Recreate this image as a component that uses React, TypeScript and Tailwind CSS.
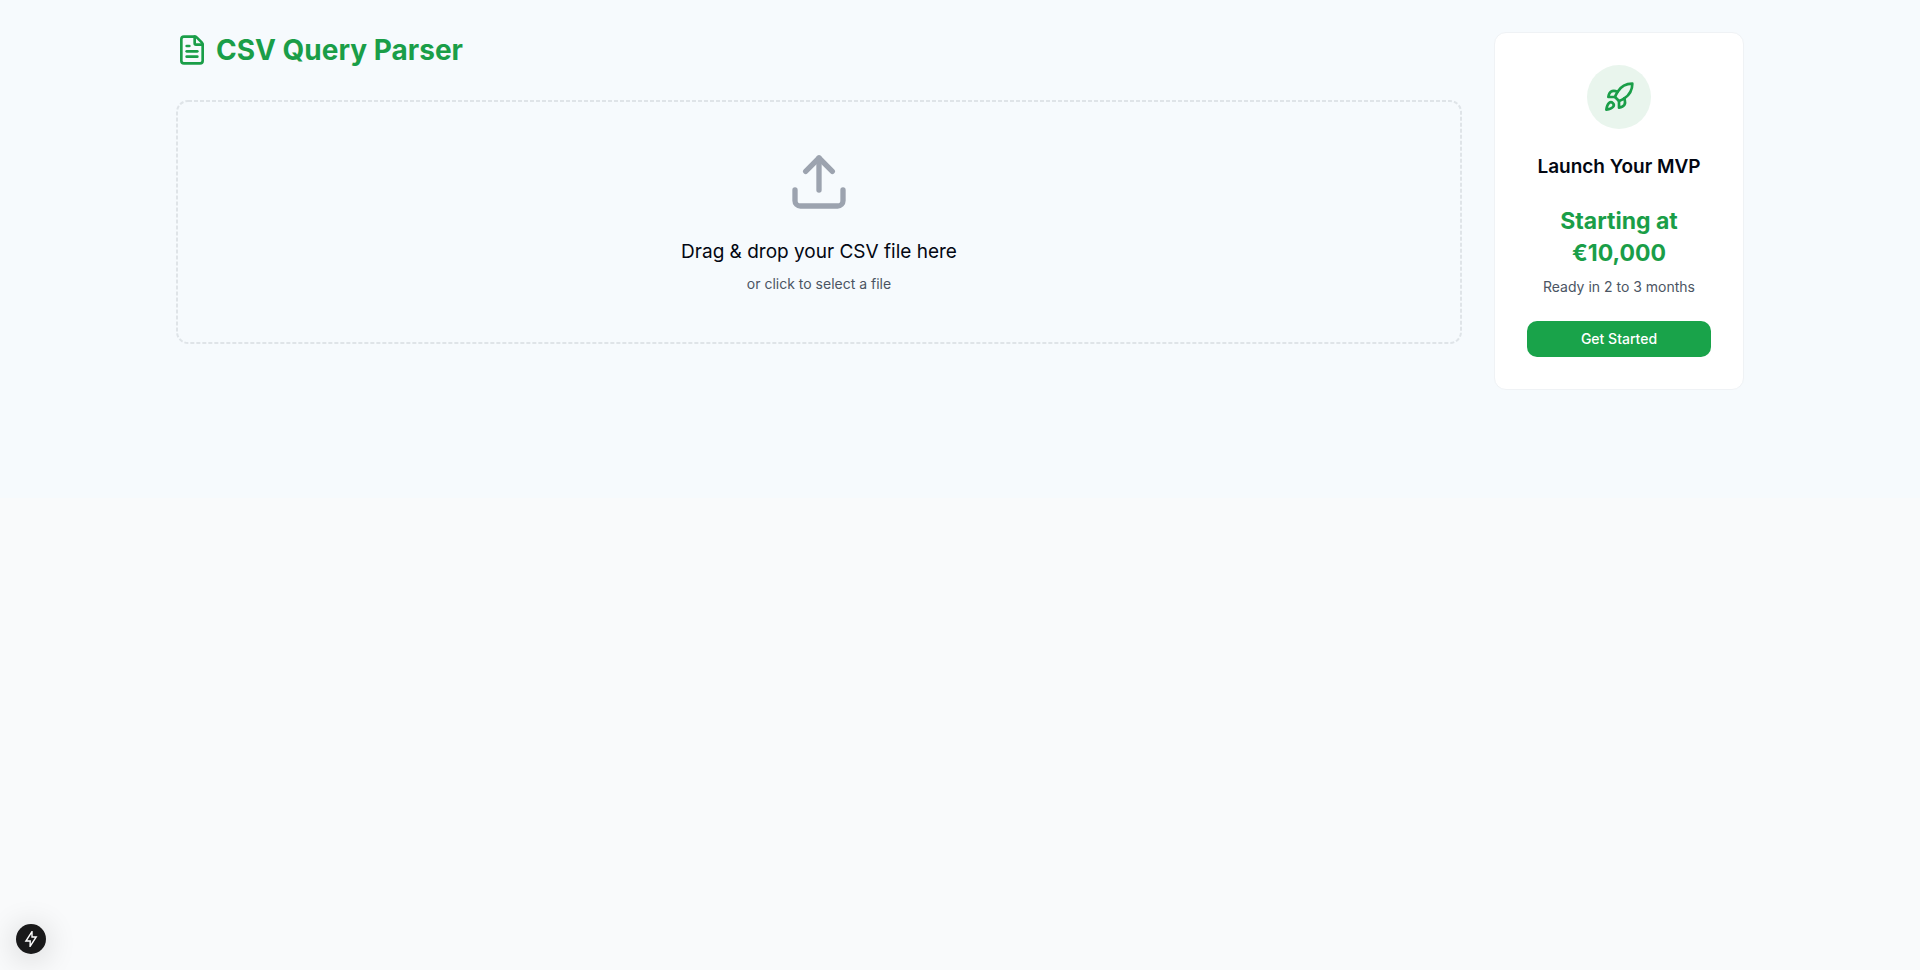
import { FileText, Rocket, Upload } from "lucide-react";

export default function App() {
  return (
    <div className="min-h-screen bg-[#f9fafb] font-[Inter,'Noto_Sans',sans-serif] text-gray-950">
      <div className="bg-[#f6fafd] pt-8 pb-27">
        <div className="mx-auto flex max-w-[1600px] items-start gap-8 px-4">
          <main className="min-w-0 flex-1">
            <h1 className="mb-8 flex items-center gap-2 text-[28px]/9 font-bold text-[#1a9e48]">
              <FileText size={32} aria-hidden="true" />
              CSV Query Parser
            </h1>
            <label
              htmlFor="csv-file"
              className="relative flex cursor-pointer flex-col items-center p-[50px] text-center"
            >
              {/* Fine dashed outline, with a shorter dash than CSS borders draw */}
              <svg
                className="pointer-events-none absolute inset-0 size-full text-[#dfe4e8]"
                fill="none"
                aria-hidden="true"
              >
                <rect
                  x="1"
                  y="1"
                  rx="11"
                  className="h-[calc(100%-2px)] w-[calc(100%-2px)]"
                  stroke="currentColor"
                  strokeWidth="2"
                  strokeDasharray="4 2"
                />
              </svg>
              <Upload size={64} className="mb-6 text-[#9ca3af]" aria-hidden="true" />
              <span className="text-[19px]/7">Drag &amp; drop your CSV file here</span>
              <span className="mt-2 text-sm text-[#4b5563]">or click to select a file</span>
              <input id="csv-file" type="file" accept=".csv" className="sr-only" />
            </label>
          </main>

          <aside className="w-[250px] shrink-0 rounded-xl border border-[#eff2f5] bg-white p-8 text-center">
            <div className="mx-auto mb-6 flex size-16 items-center justify-center rounded-full bg-[#e9f5ed] text-[#1a9e48]">
              <Rocket size={32} aria-hidden="true" />
            </div>
            <h2 className="mb-6 text-[19px]/7 font-semibold whitespace-nowrap">Launch Your MVP</h2>
            <p className="text-[23px]/8 font-bold text-[#1a9e48]">Starting at €10,000</p>
            <p className="mt-2 mb-6 text-sm whitespace-nowrap text-[#4b5563]">Ready in 2 to 3 months</p>
            <button
              type="button"
              className="h-9 w-full rounded-[10px] bg-[#19a34a] text-sm font-medium text-white"
            >
              Get Started
            </button>
          </aside>
        </div>
      </div>

      <button
        type="button"
        aria-label="Developer tools"
        className="fixed bottom-4 left-4 flex size-[30px] items-center justify-center rounded-full bg-[#19191a] text-white shadow-[0_4px_32px_rgba(0,0,0,0.2)]"
      >
        <svg width="16" height="16" viewBox="0 0 16 16" fill="none" aria-hidden="true">
          <path
            d="M9 .6 2.9 10H7.2L7.1 15.4 13.2 6H9Z"
            stroke="currentColor"
            strokeWidth="1.4"
          />
        </svg>
      </button>
    </div>
  );
}
